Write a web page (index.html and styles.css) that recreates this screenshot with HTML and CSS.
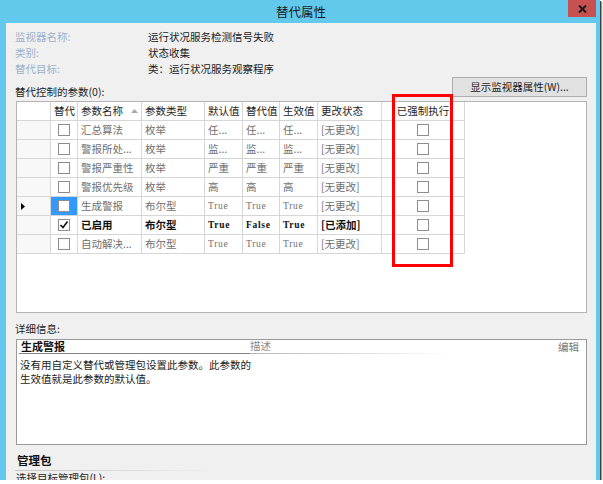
FILE: index.html
```html
<!DOCTYPE html>
<html lang="zh-CN">
<head>
<meta charset="utf-8">
<title>替代属性</title>
<link rel="stylesheet" href="styles.css">
</head>
<body>
<div class="window">
  <div class="titlebar">
    <div class="title">替代属性</div>
    <div class="close"><svg width="9" height="8" viewBox="0 0 9 8"><path d="M1 0.5 L8 7.5 M8 0.5 L1 7.5" stroke="#1a1a1a" stroke-width="2"/></svg></div>
  </div>
  <div class="client">
    <div class="info">
      <div class="lbl">监视器名称:</div><div class="val">运行状况服务检测信号失败</div>
      <div class="lbl">类别:</div><div class="val">状态收集</div>
      <div class="lbl">替代目标:</div><div class="val">类：运行状况服务观察程序</div>
    </div>
    <div class="params-head">
      <div class="params-label">替代控制的参数(0):</div>
      <div class="btn">显示监视器属性(W)...</div>
    </div>
    <div class="grid">
      <div class="row head">
        <div class="cell rh"></div>
        <div class="cell">替代</div>
        <div class="cell">参数名称<svg class="sort" width="7" height="4" viewBox="0 0 7 4"><path d="M0 4 L3.5 0 L7 4 Z" fill="#a8a8a8"/></svg></div>
        <div class="cell">参数类型</div>
        <div class="cell">默认值</div>
        <div class="cell">替代值</div>
        <div class="cell">生效值</div>
        <div class="cell">更改状态</div>
        <div class="cell center">已强制执行</div>
      </div>
      <div class="row ro">
        <div class="cell rh"></div>
        <div class="cell center"><span class="cb"></span></div>
        <div class="cell">汇总算法</div>
        <div class="cell">枚举</div>
        <div class="cell">任...</div>
        <div class="cell">任...</div>
        <div class="cell">任...</div>
        <div class="cell">[无更改]</div>
        <div class="cell center"><span class="cb"></span></div>
      </div>
      <div class="row ro">
        <div class="cell rh"></div>
        <div class="cell center"><span class="cb"></span></div>
        <div class="cell">警报所处...</div>
        <div class="cell">枚举</div>
        <div class="cell">监...</div>
        <div class="cell">监...</div>
        <div class="cell">监...</div>
        <div class="cell">[无更改]</div>
        <div class="cell center"><span class="cb"></span></div>
      </div>
      <div class="row ro">
        <div class="cell rh"></div>
        <div class="cell center"><span class="cb"></span></div>
        <div class="cell">警报严重性</div>
        <div class="cell">枚举</div>
        <div class="cell">严重</div>
        <div class="cell">严重</div>
        <div class="cell">严重</div>
        <div class="cell">[无更改]</div>
        <div class="cell center"><span class="cb"></span></div>
      </div>
      <div class="row ro">
        <div class="cell rh"></div>
        <div class="cell center"><span class="cb"></span></div>
        <div class="cell">警报优先级</div>
        <div class="cell">枚举</div>
        <div class="cell">高</div>
        <div class="cell">高</div>
        <div class="cell">高</div>
        <div class="cell">[无更改]</div>
        <div class="cell center"><span class="cb"></span></div>
      </div>
      <div class="row ro">
        <div class="cell rh"><svg class="cur" width="4" height="7" viewBox="0 0 4 7"><path d="M0 0 L4 3.5 L0 7 Z" fill="#000"/></svg></div>
        <div class="cell center sel"><span class="cb"></span></div>
        <div class="cell">生成警报</div>
        <div class="cell">布尔型</div>
        <div class="cell mono">True</div>
        <div class="cell mono">True</div>
        <div class="cell mono">True</div>
        <div class="cell">[无更改]</div>
        <div class="cell center"><span class="cb"></span></div>
      </div>
      <div class="row bold">
        <div class="cell rh"></div>
        <div class="cell center"><span class="cb"><svg width="10" height="10" viewBox="0 0 10 10"><path d="M1.5 5 L4 7.5 L8.5 1.5" fill="none" stroke="#111" stroke-width="1.6"/></svg></span></div>
        <div class="cell">已启用</div>
        <div class="cell">布尔型</div>
        <div class="cell mono">True</div>
        <div class="cell mono">False</div>
        <div class="cell mono">True</div>
        <div class="cell">[已添加]</div>
        <div class="cell center"><span class="cb"></span></div>
      </div>
      <div class="row ro">
        <div class="cell rh"></div>
        <div class="cell center"><span class="cb"></span></div>
        <div class="cell">自动解决...</div>
        <div class="cell">布尔型</div>
        <div class="cell mono">True</div>
        <div class="cell mono">True</div>
        <div class="cell mono">True</div>
        <div class="cell">[无更改]</div>
        <div class="cell center"><span class="cb"></span></div>
      </div>
    </div>
    <div class="details-label">详细信息:</div>
    <div class="details">
      <div class="dh">
        <div class="dh-title">生成警报</div>
        <div class="dh-desc">描述</div>
        <div class="dh-edit">编辑</div>
      </div>
      <div class="dbody">没有用自定义替代或管理包设置此参数。此参数的<br>生效值就是此参数的默认值。</div>
    </div>
    <div class="pack-title">管理包</div>
    <div class="pack-line"></div>
    <div class="pack-label">选择目标管理包(L):</div>
  </div>
  <div class="annot"></div>
</div>
</body>
</html>
```

FILE: styles.css
```css
* { box-sizing: border-box; margin: 0; padding: 0; }
body {
  margin: 0;
  background: #ffffff;
  font-family: "Noto Sans CJK SC", "Noto Sans", sans-serif;
  font-size: 10.5px;
  color: #1e1e1e;
}
.window {
  position: relative;
  width: 600px;
  height: 480px;
  background: #62c8ec;
  display: flex;
  flex-direction: column;
  box-shadow: 1px 1px 0 #404040, 2px 2px 1px #9a9a9a;
}
.titlebar {
  flex: none;
  height: 23px;
  display: flex;
  align-items: flex-start;
  padding: 0 4px 0 6px;
}
.title {
  flex: 1;
  margin-left: 28px;
  text-align: center;
  font-size: 12.5px;
  line-height: 23px;
  color: #1a1a1a;
}
.close {
  width: 28px;
  height: 17px;
  background: #c75050;
  display: flex;
  align-items: center;
  justify-content: center;
}
.client {
  flex: 1;
  margin: 0 4px 0 6px;
  background: #f0f0f0;
  padding: 6px 9px 0 9px;
  overflow: hidden;
  display: flex;
  flex-direction: column;
}
.info {
  display: grid;
  grid-template-columns: 133px 1fr;
  line-height: 16px;
}
.lbl { color: #9cb0ca; }
.val { color: #1a1a1a; }
.params-head {
  flex: none;
  height: 24px;
  display: flex;
  justify-content: space-between;
}
.params-label {
  align-self: flex-end;
  line-height: 16px;
  margin-bottom: 1px;
}
.btn {
  width: 135px;
  height: 20px;
  background: #e1e1e1;
  border: 1px solid #adadad;
  line-height: 18px;
  text-align: center;
}
.grid {
  flex: none;
  margin-left: 1px;
  height: 212px;
  border: 1px solid #b4b4b4;
  background: #ffffff;
}
.row {
  display: grid;
  grid-template-columns: 34px 27px 64px 63px 38px 37px 38px 64px 83px;
  width: 448px;
  height: 19px;
}
.cell {
  display: flex;
  align-items: center;
  padding-left: 3px;
  border-right: 1px solid #d6d6d6;
  border-bottom: 1px solid #d6d6d6;
  white-space: nowrap;
  overflow: hidden;
  line-height: 18px;
}
.cell.center { justify-content: center; padding-left: 0; }
.cell.rh { background: #f8f8f8; padding-left: 4px; }
.head .cell { background: #ffffff; color: #1e1e1e; }
.head .cell.rh { background: #ffffff; }
.sort { margin-left: auto; margin-right: 3px; }
.ro { color: #6f6f6f; }
.bold { font-weight: bold; color: #111111; }
.mono {
  font-family: "Liberation Serif", serif;
  font-size: 9.5px;
  letter-spacing: 0.7px;
}
.cell.sel { background: #3399ff; }
.cb {
  width: 12px;
  height: 12px;
  border: 1px solid #8d8d8d;
  background: #ffffff;
  display: flex;
  align-items: center;
  justify-content: center;
}
.details-label {
  margin-top: 8px;
  line-height: 16px;
}
.details {
  flex: none;
  margin-top: 2px;
  margin-left: 1px;
  height: 106px;
  border: 1px solid #9a9a9a;
  background: #ffffff;
}
.dh {
  display: flex;
  height: 14px;
}
.dh-title {
  flex: none;
  margin-left: 2px;
  width: 231px;
  padding-left: 2px;
  border-bottom: 1px solid #828282;
  font-weight: bold;
  font-size: 11px;
  line-height: 12px;
  color: #111111;
}
.dh-desc {
  flex: none;
  width: 200px;
  color: #8a8a8a;
  line-height: 12px;
  text-align: left;
  background: linear-gradient(to right, #b4b4b4, rgba(200,200,200,0)) left bottom / 100% 1px no-repeat;
}
.dh-edit {
  margin-left: auto;
  margin-right: 7px;
  color: #777777;
  line-height: 13px;
}
.dbody {
  padding: 4px 0 0 3px;
  line-height: 14px;
  color: #1a1a1a;
}
.pack-title {
  margin-top: 7px;
  padding-left: 2px;
  line-height: 16px;
  font-weight: bold;
  font-size: 11.5px;
  color: #111111;
}
.pack-line {
  flex: none;
  height: 1px;
  margin-top: 2px;
  width: 200px;
  background: linear-gradient(to right, #c4c4c4, rgba(200,200,200,0));
}
.pack-label {
  line-height: 14px;
  padding-left: 1px;
}
.annot {
  position: absolute;
  left: 392px;
  top: 94px;
  width: 61px;
  height: 173px;
  border: 3px solid #ff0000;
}
```
